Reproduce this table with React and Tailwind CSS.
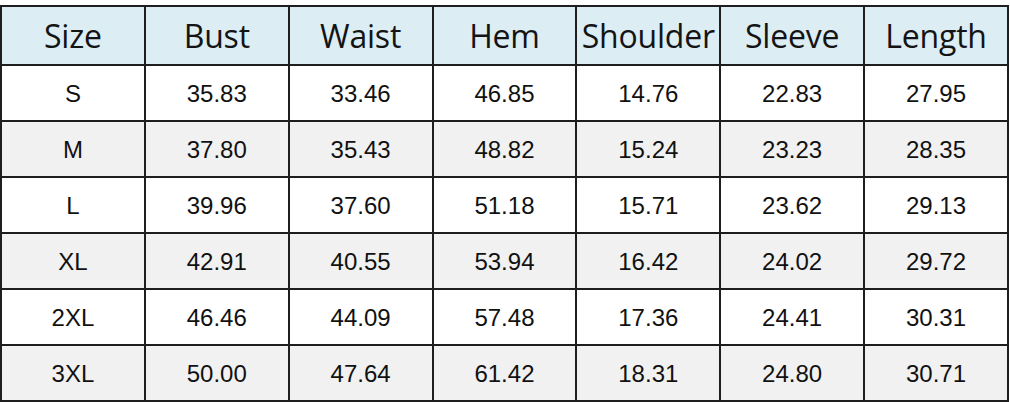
import React from "react";

const headers = ["Size", "Bust", "Waist", "Hem", "Shoulder", "Sleeve", "Length"];
const rows = [
  ["S", "35.83", "33.46", "46.85", "14.76", "22.83", "27.95"],
  ["M", "37.80", "35.43", "48.82", "15.24", "23.23", "28.35"],
  ["L", "39.96", "37.60", "51.18", "15.71", "23.62", "29.13"],
  ["XL", "42.91", "40.55", "53.94", "16.42", "24.02", "29.72"],
  ["2XL", "46.46", "44.09", "57.48", "17.36", "24.41", "30.31"],
  ["3XL", "50.00", "47.64", "61.42", "18.31", "24.80", "30.71"],
];

export default function App() {
  return (
    <div className="w-[1010px] h-[402px] bg-white overflow-hidden pt-[5px] pl-0">
      <table className="border-collapse w-[1009px] table-fixed">
        <thead>
          <tr className="bg-[#dcedf4]">
            {headers.map((h) => (
              <th
                key={h}
                className="border-2 border-[#1e1e1e] h-[59px] p-0 text-center font-normal text-[32px] leading-none text-[#141414] tracking-[-0.2px]"
                style={{ fontFamily: '"Open Sans", "Noto Sans", sans-serif' }}
              >
                {h}
              </th>
            ))}
          </tr>
        </thead>
        <tbody>
          {rows.map((r, i) => (
            <tr key={r[0]} className={i % 2 === 1 ? "bg-[#f1f1f1]" : "bg-white"}>
              {r.map((c, j) => (
                <td
                  key={j}
                  className="border-2 border-[#1e1e1e] h-[56px] p-0 pt-[2px] text-center text-[24px] leading-none text-[#111111]"
                  style={{ fontFamily: '"Liberation Sans", Arial, sans-serif' }}
                >
                  {c}
                </td>
              ))}
            </tr>
          ))}
        </tbody>
      </table>
    </div>
  );
}
